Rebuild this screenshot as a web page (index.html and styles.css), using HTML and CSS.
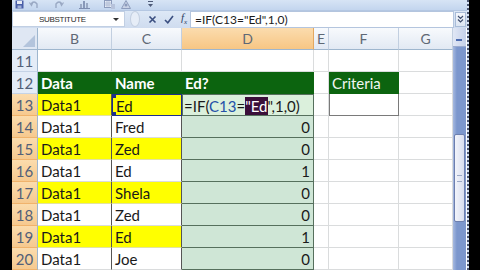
FILE: index.html
```html
<!DOCTYPE html>
<html lang="en">
<head>
    <meta charset="UTF-8">
    <title>Excel - IF formula</title>
    <link rel="stylesheet" href="styles.css">
</head>
<body>
    <div class="screen">
        <div class="window">
            <div class="qat">
                <svg class="qi q-save" width="9" height="9" viewBox="0 0 9 9"><rect x="0.5" y="0.5" width="8" height="8" fill="#4a5fa8"/><rect x="2" y="1" width="5" height="3" fill="#e8ecf6"/><rect x="2.5" y="5.5" width="4" height="3" fill="#9fb0d8"/></svg>
                <svg class="qi q-undo" width="10" height="9" viewBox="0 0 10 9"><path d="M2 4 Q5 0 8 4 L8 8" fill="none" stroke="#9aa9c4" stroke-width="1.4"/><path d="M0.5 2.5 L2.5 5.5 L4 2" fill="none" stroke="#9aa9c4" stroke-width="1.2"/></svg>
                <svg class="qi q-redo" width="10" height="9" viewBox="0 0 10 9"><path d="M8 4 Q5 0 2 4 L2 8" fill="none" stroke="#9aa9c4" stroke-width="1.4"/><path d="M9.5 2.5 L7.5 5.5 L6 2" fill="none" stroke="#9aa9c4" stroke-width="1.2"/></svg>
                <svg class="qi q-chart" width="11" height="9" viewBox="0 0 11 9"><rect x="1" y="4" width="2" height="5" fill="#9aa9c4"/><rect x="4" y="1" width="2" height="8" fill="#8898b8"/><rect x="7" y="3" width="2" height="6" fill="#9aa9c4"/><rect x="0" y="8" width="11" height="1" fill="#7d8db0"/></svg>
                <svg class="qi q-grid" width="11" height="9" viewBox="0 0 11 9"><rect x="0.5" y="0.5" width="7" height="7" fill="#e9eef7" stroke="#8d9cbc"/><path d="M1 3 H7 M1 5 H7 M3 1 V7 M5 1 V7" stroke="#a7b4cf" stroke-width="0.8"/><rect x="7" y="4" width="4" height="5" fill="#b7c3db"/></svg>
                <svg class="qi q-tri" width="10" height="9" viewBox="0 0 10 9"><path d="M5 0.5 L9.5 8.5 H0.5 Z" fill="#c9d3e6" stroke="#8d9cbc"/><circle cx="5" cy="5" r="1.5" fill="#8d9cbc"/></svg>
                <svg class="qi q-drop" width="7" height="9" viewBox="0 0 7 9"><rect x="1" y="1" width="5" height="1" fill="#4d5a78"/><path d="M1 4 H6 L3.5 7 Z" fill="#4d5a78"/></svg>
            </div>
            <div class="fbar">
                <div class="namebox">
                    <span class="nb-text">SUBSTITUTE</span>
                    <span class="nb-arrow"></span>
                </div>
                <div class="fbtns">
                    <span class="grip"></span>
                    <svg width="9" height="9" viewBox="0 0 9 9"><path d="M1.5 1.5 L7.5 7.5 M7.5 1.5 L1.5 7.5" stroke="#3b4f80" stroke-width="1.6"/></svg>
                    <svg width="10" height="9" viewBox="0 0 10 9"><path d="M1 5 L3.8 7.8 L9 1" fill="none" stroke="#3b4f80" stroke-width="1.6"/></svg>
                    <span class="fx">f<sub>x</sub></span>
                </div>
                <div class="finput">=IF(C13="Ed",1,0)</div>
                <div class="fexpand">
                    <svg width="7" height="8" viewBox="0 0 7 8"><path d="M1 1 L3.5 3.5 L6 1 M1 4.5 L3.5 7 L6 4.5" fill="none" stroke="#3d4c6d" stroke-width="1.2"/></svg>
                </div>
            </div>
            <div class="main">
                <div class="sheet">
                    <div class="corner"></div>
                    <div class="ch">B</div>
                    <div class="ch">C</div>
                    <div class="ch ch-sel">D</div>
                    <div class="ch">E</div>
                    <div class="ch">F</div>
                    <div class="ch">G</div>

                    <div class="rh">11</div>
                    <div class="c"></div><div class="c"></div><div class="c"></div><div class="c"></div><div class="c"></div><div class="c"></div>

                    <div class="rh">12</div>
                    <div class="c head">Data</div>
                    <div class="c head">Name</div>
                    <div class="c head">Ed?</div>
                    <div class="c"></div>
                    <div class="c crit">Criteria</div>
                    <div class="c"></div>

                    <div class="rh rh-sel">13</div>
                    <div class="c yel vb">Data1</div>
                    <div class="c yel ref">Ed<span class="hdl tl"></span><span class="hdl bl"></span></div>
                    <div class="c edit">=IF(<span class="fref">C13</span>=<span class="hl">"Ed</span>",1,0)</div>
                    <div class="c"></div>
                    <div class="c crit-in"></div>
                    <div class="c"></div>

                    <div class="rh rh-sel">14</div>
                    <div class="c vb">Data1</div>
                    <div class="c vb">Fred</div>
                    <div class="c sel">0</div>
                    <div class="c"></div><div class="c"></div><div class="c"></div>

                    <div class="rh rh-sel">15</div>
                    <div class="c yel vb">Data1</div>
                    <div class="c yel vb">Zed</div>
                    <div class="c sel">0</div>
                    <div class="c"></div><div class="c"></div><div class="c"></div>

                    <div class="rh rh-sel">16</div>
                    <div class="c vb">Data1</div>
                    <div class="c vb">Ed</div>
                    <div class="c sel">1</div>
                    <div class="c"></div><div class="c"></div><div class="c"></div>

                    <div class="rh rh-sel">17</div>
                    <div class="c yel vb">Data1</div>
                    <div class="c yel vb">Shela</div>
                    <div class="c sel">0</div>
                    <div class="c"></div><div class="c"></div><div class="c"></div>

                    <div class="rh rh-sel">18</div>
                    <div class="c vb">Data1</div>
                    <div class="c vb">Zed</div>
                    <div class="c sel">0</div>
                    <div class="c"></div><div class="c"></div><div class="c"></div>

                    <div class="rh rh-sel">19</div>
                    <div class="c yel vb">Data1</div>
                    <div class="c yel vb">Ed</div>
                    <div class="c sel">1</div>
                    <div class="c"></div><div class="c"></div><div class="c"></div>

                    <div class="rh rh-sel">20</div>
                    <div class="c vb">Data1</div>
                    <div class="c vb">Joe</div>
                    <div class="c sel">0</div>
                    <div class="c"></div><div class="c"></div><div class="c"></div>
                </div>
                <div class="vscroll">
                    <div class="vs-split"></div>
                    <div class="vs-track">
                        <div class="vs-thumb"><span class="vs-grip"></span></div>
                    </div>
                </div>
            </div>
        </div>
    </div>
</body>
</html>
```

FILE: styles.css
```css
body {
    margin: 0;
    padding: 0;
    background: #000;
    font-family: 'Lato', 'Liberation Sans', sans-serif;
    overflow: hidden;
}

.screen {
    width: 480px;
    height: 270px;
    display: flex;
    padding-left: 12px;
    box-sizing: border-box;
    background: #000;
}

.window {
    width: 455px;
    height: 270px;
    display: flex;
    flex-direction: column;
    background: #d5e1f2;
    border-right: 2px dotted #4a5570;
    overflow: hidden;
}

/* quick access toolbar */
.qat {
    height: 11px;
    display: flex;
    align-items: center;
    background: linear-gradient(#d7e4f5, #c3d5ee);
}

.qat .qi {
    display: block;
}

.q-save { margin-left: 3px; }
.q-undo { margin-left: 5px; }
.q-redo { margin-left: 15px; }
.q-chart { margin-left: 15px; }
.q-grid { margin-left: 14px; }
.q-tri { margin-left: 6px; }
.q-drop { margin-left: 16px; }

/* formula bar */
.fbar {
    height: 21px;
    display: flex;
    align-items: center;
    background: linear-gradient(#dde8f6, #cfdcef);
    border-top: 1px solid #b4c7e2;
    box-sizing: border-box;
}

.namebox {
    width: 113px;
    height: 16px;
    display: flex;
    align-items: center;
    background: #fff;
    box-sizing: border-box;
    border: 1px solid #c1cfe3;
}

.nb-text {
    flex: 1;
    font-family: 'Liberation Sans', sans-serif;
    font-size: 8px;
    letter-spacing: -0.3px;
    color: #2a2a2a;
    padding-left: 26px;
}

.nb-arrow {
    width: 0;
    height: 0;
    margin-right: 5px;
    border-left: 3px solid transparent;
    border-right: 3px solid transparent;
    border-top: 3px solid #333;
}

.fbtns {
    width: 65px;
    display: flex;
    align-items: center;
    gap: 7px;
    padding-left: 5px;
    box-sizing: border-box;
}

.fbtns svg {
    display: block;
}

.grip {
    width: 8px;
    height: 14px;
    border-radius: 50%;
    border: 1px solid #c3cfe0;
    background: #e6edf7;
    margin-right: 1px;
}

.fx {
    font-family: 'Liberation Serif', serif;
    font-style: italic;
    font-size: 11px;
    color: #2f3f63;
    line-height: 1;
}

.fx sub {
    font-size: 7px;
}

.finput {
    flex: 1;
    height: 17px;
    background: #fff;
    border: 1px solid #b4c5de;
    box-sizing: border-box;
    font-size: 12px;
    line-height: 15px;
    padding-left: 4px;
    color: #1c1c1c;
}

.fexpand {
    width: 11px;
    height: 15px;
    margin: 0 1px;
    display: flex;
    align-items: center;
    justify-content: center;
    background: linear-gradient(#f4f7fc, #dce5f2);
    border: 1px solid #a9bcd8;
    box-sizing: border-box;
}

/* sheet */
.main {
    flex: 1;
    display: flex;
    background: #fff;
}

.sheet {
    display: grid;
    grid-template-columns: 26px 74px 70px 132px 15px 70px 54px;
    grid-auto-rows: 22px;
    align-content: start;
}

.sheet > div {
    box-sizing: border-box;
    white-space: nowrap;
    overflow: hidden;
}

.corner {
    background: #dfe7f3;
    border-right: 1px solid #9eb6ce;
    border-bottom: 1px solid #9eb6ce;
    position: relative;
}

.corner::after {
    content: "";
    position: absolute;
    right: 2px;
    bottom: 2px;
    border-left: 12px solid transparent;
    border-bottom: 12px solid #b3c4dc;
}

.ch {
    background: linear-gradient(#f8fafd, #e2e9f3);
    border-right: 1px solid #c2cfe0;
    border-bottom: 1px solid #9eb6ce;
    text-align: center;
    font-size: 14px;
    line-height: 22px;
    color: #5f6875;
}

.ch-sel {
    background: linear-gradient(#fbdcae, #f7c684);
    border-right-color: #e3a860;
}

.rh {
    background: #e4ecf7;
    border-right: 1px solid #9eb6ce;
    border-bottom: 1px solid #c5d3e6;
    text-align: center;
    font-size: 15px;
    line-height: 22px;
    color: #526078;
}

.rh-sel {
    background: linear-gradient(#fbdcad, #f6c98f);
    border-bottom-color: #f0b36c;
}

.c {
    border-right: 1px solid #dadcdd;
    border-bottom: 1px solid #dadcdd;
    font-size: 15px;
    line-height: 22px;
    padding: 0 3px;
    color: #1a1a1a;
    background: #fff;
}

.head {
    background: #0c640f;
    color: #fff;
    font-weight: bold;
    border-color: #0c640f;
}

.crit {
    background: #0c640f;
    color: #f2f6f2;
    border-color: #0c640f;
}

.crit-in {
    border: 1px solid #7a7a7a;
    border-top: none;
}

.yel {
    background: #ffff00;
    border-bottom-color: #e3e3a0;
}

.vb {
    border-right-color: #555;
}

.ref {
    border: 1px solid #1f2f8a;
    position: relative;
}

.hdl {
    position: absolute;
    left: -1px;
    width: 4px;
    height: 4px;
    background: #1f2f8a;
}

.hdl.tl {
    top: -1px;
}

.hdl.bl {
    bottom: -1px;
}

.edit {
    background: #dbf0dc;
    border: 1px solid #56705d;
    font-size: 15px;
    padding-left: 1px;
    color: #1a1a1a;
}

.fref {
    color: #2551a8;
}

.hl {
    background: #3b0f3a;
    color: #fff;
}

.sel {
    background: #cfe6d6;
    text-align: right;
    border-right: 1px solid #56705d;
    border-bottom: 1px solid #56705d;
}

/* vertical scrollbar */
.vscroll {
    width: 13px;
    display: flex;
    flex-direction: column;
    background: #7f9ad0;
}

.vs-split {
    height: 18px;
    background: linear-gradient(90deg, #e1e7f5, #c5d1ea);
    border-bottom: 1px solid #9aabd0;
    position: relative;
}

.vs-split::after {
    content: "";
    position: absolute;
    left: 3px;
    top: 11px;
    width: 6px;
    height: 2px;
    background: #4c6bb0;
}

.vs-track {
    flex: 1;
    padding-top: 87px;
    background: linear-gradient(90deg, #a6b9e0, #7c97cd 30%, #7c97cd);
}

.vs-thumb {
    height: 86px;
    margin: 0 1px;
    background: linear-gradient(90deg, #f2f4fb, #d9dff0);
    border: 1px solid #6d7fae;
    border-radius: 2px;
    display: flex;
    align-items: center;
    justify-content: center;
}

.vs-grip {
    width: 5px;
    height: 5px;
    border-top: 1px solid #9ba8c6;
    border-bottom: 1px solid #9ba8c6;
}
```
